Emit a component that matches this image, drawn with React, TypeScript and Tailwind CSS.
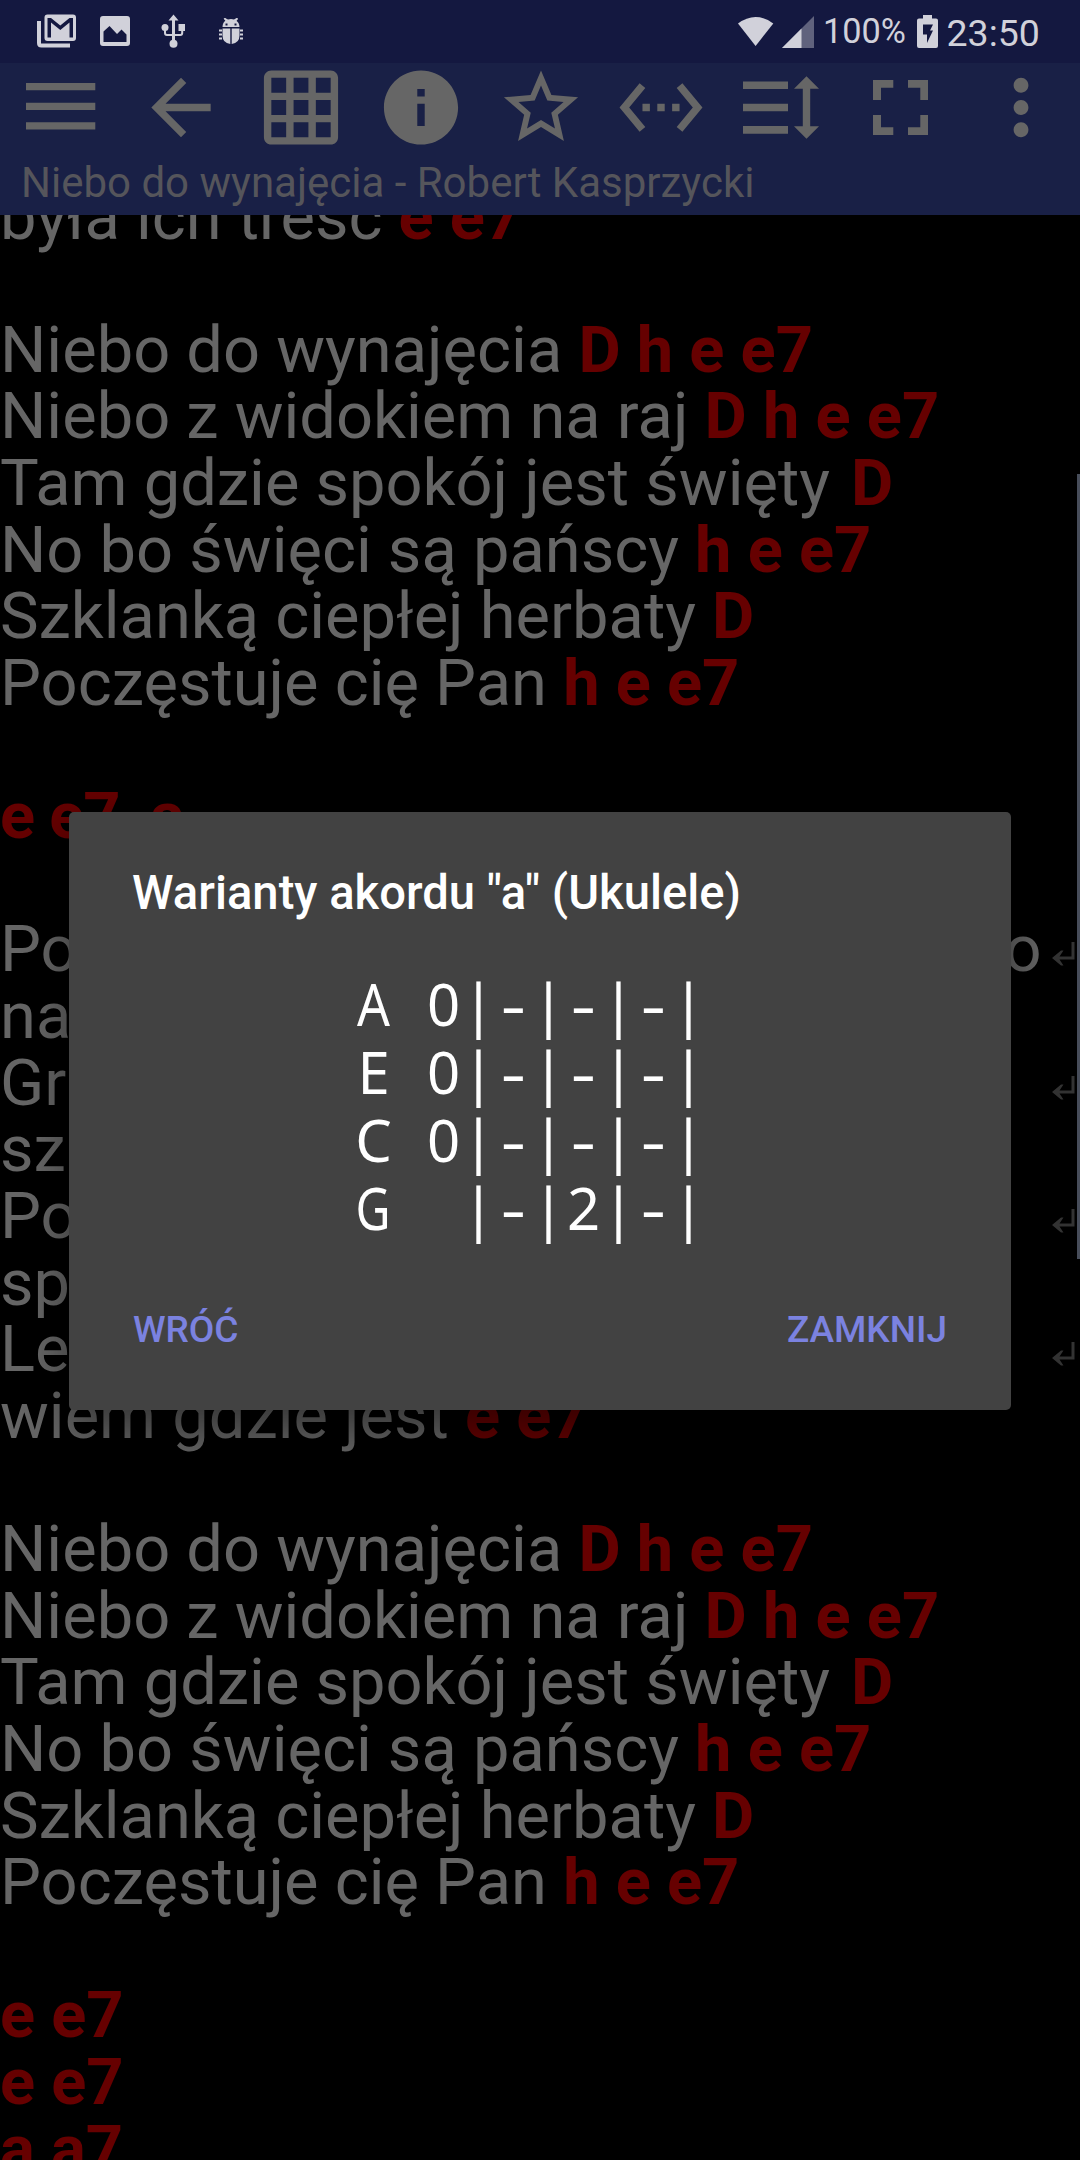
import React from "react";

type Line = { text?: string; chords?: string; chordsClass?: string; wrap?: boolean; tail?: string };

const chorus: Line[] = [
  { text: "Niebo do wynajęcia ", chords: "D h e e7" },
  { text: "Niebo z widokiem na raj ", chords: "D h e e7" },
  { text: "Tam gdzie spokój jest święty ", chords: "D", chordsClass: "ml-[5px]" },
  { text: "No bo święci są pańscy ", chords: "h e e7" },
  { text: "Szklanką ciepłej herbaty ", chords: "D" },
  { text: "Poczęstuje cię Pan ", chords: "h e e7" },
];

const lines: Line[] = [
  { text: "była ich treść ", chords: "e e7" },
  {},
  ...chorus,
  {},
  { chords: "e e7  a", chordsClass: "tracking-[-1px]" },
  {},
  { text: "Po", wrap: true, tail: "o" },
  { text: "na" },
  { text: "Grz", wrap: true },
  { text: "sz" },
  { text: "Po", wrap: true },
  { text: "sp" },
  { text: "Le", wrap: true },
  { text: "wiem gdzie jest ", chords: "e e7" },
  {},
  ...chorus,
  {},
  { chords: "e e7" },
  { chords: "e e7" },
  { chords: "a a7" },
];

function WrapArrow() {
  return (
    <svg className="mr-[5px] mt-[26px] h-6 w-[23px] shrink-0" viewBox="0 0 23 24" fill="#333">
      <path d="M19.5 0H22.5V17.5H7.5L11.5 23.5H9L0 16 9 8.5H11.500L7.500 14.500H19.500Z" />
    </svg>
  );
}

function LyricLine({ line }: { line: Line }) {
  return (
    <div className="flex h-[66.64px] items-start whitespace-pre">
      <span className="leading-[66.64px]">
        {line.text}
        <b className={`font-bold text-[#660000] ${line.chordsClass ?? ""}`}>{line.chords}</b>
      </span>
      <span className="ml-auto mr-[10.500px] leading-[66.64px]">{line.tail}</span>
      {line.wrap && <WrapArrow />}
    </div>
  );
}

const materialIcons = {
  back: "M20 11H7.83l5.59-5.59L12 4l-8 8 8 8 1.41-1.41L7.83 13H20v-2z",
  grid: "M20 2H4c-1.1 0-2 .9-2 2v16c0 1.1.9 2 2 2h16c1.100 0 2-.9 2-2V4c0-1.100-.9-2-2-2zM8 20H4v-4h4v4zm0-6H4v-4h4v4zm0-6H4V4h4v4zm6 12h-4v-4h4v4zm0-6h-4v-4h4v4zm0-6h-4V4h4v4zm6 12h-4v-4h4v4zm0-6h-4v-4h4v4zm0-6h-4V4h4v4z",
  info: "M12 2C6.480 2 2 6.480 2 12s4.480 10 10 10 10-4.480 10-10S17.520 2 12 2zm1 15h-2v-6h2v6zm0-8h-2V7h2v2z",
  star: "M22 9.240l-7.190-.62L12 2 9.190 8.630 2 9.240l5.460 4.730L5.820 21 12 17.270 18.180 21l-1.630-7.030L22 9.240zM12 15.400l-3.760 2.270 1-4.280-3.320-2.880 4.380-.38L12 6.100l1.710 4.040 4.380.38-3.320 2.880 1 4.280L12 15.400z",
  code: "M7.770 6.760L6.230 5.480.82 12l5.410 6.520 1.540-1.280L3.420 12l4.350-5.240zM7 13h2v-2H7v2zm10-2h-2v2h2v-2zm-6 2h2v-2h-2v2zm6.770-7.520l-1.540 1.280L20.580 12l-4.350 5.240 1.540 1.280L23.180 12l-5.410-6.520z",
  more: "M12 8c1.100 0 2-.9 2-2s-.9-2-2-2-2 .9-2 2 .9 2 2 2zm0 2c-1.100 0-2 .9-2 2s.9 2 2 2 2-.9 2-2-.9-2-2-2zm0 6c-1.100 0-2 .9-2 2s.9 2 2 2 2-.9 2-2-.9-2-2-2z",
};

function Material({ d }: { d: string }) {
  return (
    <svg className="ml-[15.500px] h-[89px] w-[90px]" viewBox="0 0 24 24" fill="currentColor">
      <path d={d} fillRule="evenodd" />
    </svg>
  );
}

function Wide({ d }: { d: string }) {
  return (
    <svg className="h-[90px] w-[120px]" viewBox="0 0 120 90" fill="currentColor">
      <path d={d} />
    </svg>
  );
}

function StatusBar() {
  return (
    <div className="flex h-[63px] items-start bg-[#141840] text-[#d1d1da]">
      <svg className="h-[63px] w-[260px] shrink-0" viewBox="0 0 260 63" fill="currentColor">
        <path d="M37 21h4v22.500h29v4H41.500q-4.500 0-4.500-4.500Z" />
        <path fillRule="evenodd" d="M47.500 14.500h25.500q3 0 3 3v20.500q0 3-3 3H47.500q-3 0-3-3V17.500q0-3 3-3ZM47.500 18v19.500h3.500V22.500l9.300 7.500L69.500 22.500v15H73V18h-3.500l-9.200 7.500L51 18Z" />
        <path fillRule="evenodd" d="M103 16h24q3 0 3 3v24q0 3-3 3h-24q-3 0-3-3V19q0-3 3-3ZM103.500 31.500V42h23V34.500l-5-5-4.500 4.500-7.500-8Z" />
        <circle cx="165" cy="27.500" r="3.500" />
        <rect x="178.500" y="24" width="6.500" height="7" />
        <circle cx="173.500" cy="43.700" r="4" />
        <path d="M168.500 20.500L173.500 14.500l5 6H175v20h-3v-20Z" />
        <path d="M165 28v5q0 2 2 2h13.200q2 0 2-2v-5" fill="none" stroke="currentColor" strokeWidth="2" />
        <path fillRule="evenodd" d="M222.500 27q0-4.500 3.500-6.800L223.500 18.500 225 18l3 1.500q3-.8 6 0L236.500 18l1.500.5-2.500 1.700q4 2.300 4 6.800ZM225.500 23.500v2h2v-2Zm9 0v2h2v-2Z" />
        <path d="M224.500 18.500l2.500 3M237.500 18.500l-2.500 3" stroke="currentColor" strokeWidth="1.500" />
        <path d="M222.500 28.500h7.800V44q-7.800-1-7.800-8.500ZM231.700 28.500h7.800v7q0 7.500-7.800 8.500Z" />
        <path d="M219 30.500h3M219 34.500h3M219 38.500h3M240 30.500h3M240 34.500h3M240 38.500h3" stroke="currentColor" strokeWidth="2" />
      </svg>
      <svg className="ml-[476px] h-[63px] w-[80px] shrink-0" viewBox="736 0 80 63" fill="currentColor">
        <path d="M738 23.500Q755.500 10.500 773.300 23.500L755.600 46Z" />
        <path d="M814 16v32h-32Z" opacity=".4" />
        <path d="M801.500 28.500V48H782Z" />
      </svg>
      <span className="ml-[7px] mt-[10px] w-[85px] text-[34.300px] leading-[42px]">100%</span>
      <svg className="ml-[8px] h-[63px] w-[24px] shrink-0" viewBox="916 0 24 63" fill="currentColor">
        <path fillRule="evenodd" d="M923 15h9v3.500h4q2 0 2 2V46q0 2-2 2H919q-2 0-2-2V20.500q0-2 2-2h4ZM923 24.500V34.500h4V43l6-12.500h-3l3-6Z" />
      </svg>
      <span className="ml-[6.500px] mt-[11px] text-[37.500px] leading-[44px]">23:50</span>
    </div>
  );
}

function Toolbar() {
  return (
    <div className="h-[152px] bg-[#192046] text-[#666]">
      <div className="grid h-[90px] grid-cols-9">
        <Wide d="M26 20h69.300v7.300H26ZM26 39.700h69.300v7.300H26ZM26 59.300h69.300v7.300H26Z" />
        <Material d={materialIcons.back} />
        <Material d={materialIcons.grid} />
        <Material d={materialIcons.info} />
        <Material d={materialIcons.star} />
        <Material d={materialIcons.code} />
        <Wide d="M23 18.500h45v7.500H23ZM23 40.700h45v7.600H23ZM23 63h45v7.700H23ZM86.500 13.300L99 25.700H90.200V63.300H99L86.500 75.700 74 63.300H82.800V25.700H74Z" />
        <Wide d="M33 17H53.300V24.700H41V37H33ZM68 17H88V37H80.300V24.700H68ZM33 52H41V64.300H53.300V72H33ZM80.300 52H88V72H68V64.300H80.300Z" />
        <Material d={materialIcons.more} />
      </div>
      <div className="ml-[21px] mt-[5px] whitespace-nowrap text-[42px] leading-[50px] text-[#55555b]">
        Niebo do wynajęcia - Robert Kasprzycki
      </div>
    </div>
  );
}

const strings = ["A 0|-|-|-|", "E 0|-|-|-|", "C 0|-|-|-|", "G  |-|2|-|"];

const glyphScale: Record<string, string> = {
  A: "scale-x-[0.89]",
  G: "scale-x-[0.83]",
  "-": "scale-x-[1.35]",
};

function Tablature() {
  return (
    <div className="mx-auto w-[350px] font-['Noto_Sans'] text-[58px] leading-[68px]">
      {strings.map((row) => (
        <div key={row} className="flex h-[68px] whitespace-pre">
          {row.split("").map((c, i) => (
            <span key={i} className="flex w-[35px] justify-center">
              <span className={glyphScale[c] ?? ""}>{c}</span>
            </span>
          ))}
        </div>
      ))}
    </div>
  );
}

function ChordDialog() {
  return (
    <div className="absolute left-[69px] top-[812px] flex h-[598px] w-[942px] flex-col rounded-[5px] bg-[#424242] px-16 text-white shadow-[0_20px_50px_rgba(0,0,0,0.5)]">
      <h1 className="-ml-px mt-[53px] whitespace-nowrap text-[47.200px] font-medium leading-[56px]">
        Warianty akordu "a" (Ukulele)
      </h1>
      <div className="-ml-[18px] mt-[49px]">
        <Tablature />
      </div>
      <div className="mt-[66px] flex justify-between text-[37px] font-medium leading-[44px] text-[#7b82e0]">
        <button>WRÓĆ</button>
        <button>ZAMKNIJ</button>
      </div>
    </div>
  );
}

export default function App() {
  return (
    <div className="relative flex h-[2160px] w-[1080px] flex-col overflow-hidden bg-black font-['Roboto',sans-serif]">
      <StatusBar />
      <Toolbar />
      <div className="min-h-0 flex-1 overflow-hidden text-[65px] text-[#666]">
        <div className="-mt-[31.500px]">
          {lines.map((line, i) => (
            <LyricLine key={i} line={line} />
          ))}
        </div>
      </div>
      <div className="absolute right-0 top-[474px] h-[785px] w-[3px] bg-[#474d5a]" />
      <ChordDialog />
    </div>
  );
}
